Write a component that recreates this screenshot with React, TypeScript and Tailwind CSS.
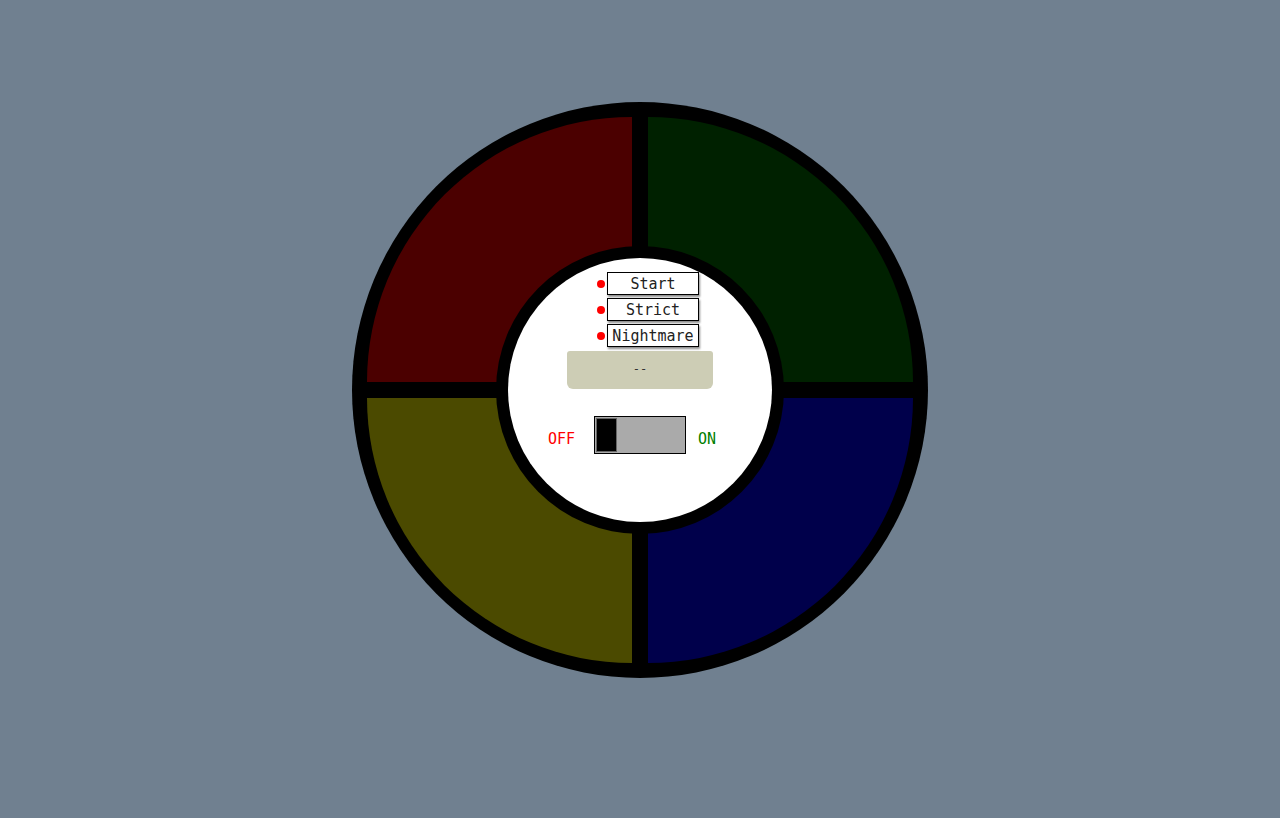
import React, { useState } from 'react';

const modes = ['Start', 'Strict', 'Nightmare'];

export default function App() {
  const [on, setOn] = useState(false);

  return (
    <div className="min-h-[818px] w-full bg-[#708090] pt-[102px] font-['DejaVu_Sans_Mono',monospace]">
      {/* Board */}
      <div className="relative mx-auto h-[576px] w-[576px] rounded-full bg-black p-[15px]">
        <div className="grid grid-cols-[265px_265px] gap-[16px]">
          <div className="h-[265px] w-[265px] rounded-tl-[265px] bg-[#4b0000]" />
          <div className="h-[265px] w-[265px] rounded-tr-[265px] bg-[#002100]" />
          <div className="h-[265px] w-[265px] rounded-bl-[265px] bg-[#4b4a00]" />
          <div className="h-[265px] w-[265px] rounded-br-[265px] bg-[#00004b]" />
        </div>

        {/* Control panel */}
        <div className="absolute left-[144px] top-[144px] h-[288px] w-[288px] rounded-full bg-black p-[12px]">
          <div className="flex h-[264px] w-[264px] flex-col items-center rounded-full bg-white pt-[14px]">
            <div className="ml-[16px] flex flex-col gap-[3px]">
              {modes.map(m => (
                <div key={m} className="flex items-center gap-[2px]">
                  <span className="h-[8px] w-[8px] rounded-full bg-[#ff0000]" />
                  <button className="h-[23px] w-[92px] border border-black bg-white pt-[1px] text-[15px] leading-none text-[#222] shadow-[1px_2px_2px_rgba(0,0,0,0.45)]">
                    {m}
                  </button>
                </div>
              ))}
            </div>
            <div className="mt-[4px] flex h-[38px] w-[146px] items-center justify-center rounded-b-[6px] rounded-t-[3px] bg-[#cdcdb5] pb-[2px] text-[12px] text-[#333]">
              --
            </div>
            <div className="mt-[27px] flex items-center">
              <span className="mr-[19px] w-[41px] pt-[8px] text-right text-[15px] text-[#ff0000]">OFF</span>
              <button
                onClick={() => setOn(!on)}
                className={`flex h-[38px] w-[92px] border border-black bg-[#aaaaaa] p-[1px] ${on ? 'justify-end' : 'justify-start'}`}
              >
                <span className="h-full w-[21px] border border-[#666] bg-black" />
              </button>
              <span className="ml-[12px] w-[48px] pt-[8px] text-[15px] text-[#008000]">ON</span>
            </div>
          </div>
        </div>
      </div>
    </div>
  );
}
